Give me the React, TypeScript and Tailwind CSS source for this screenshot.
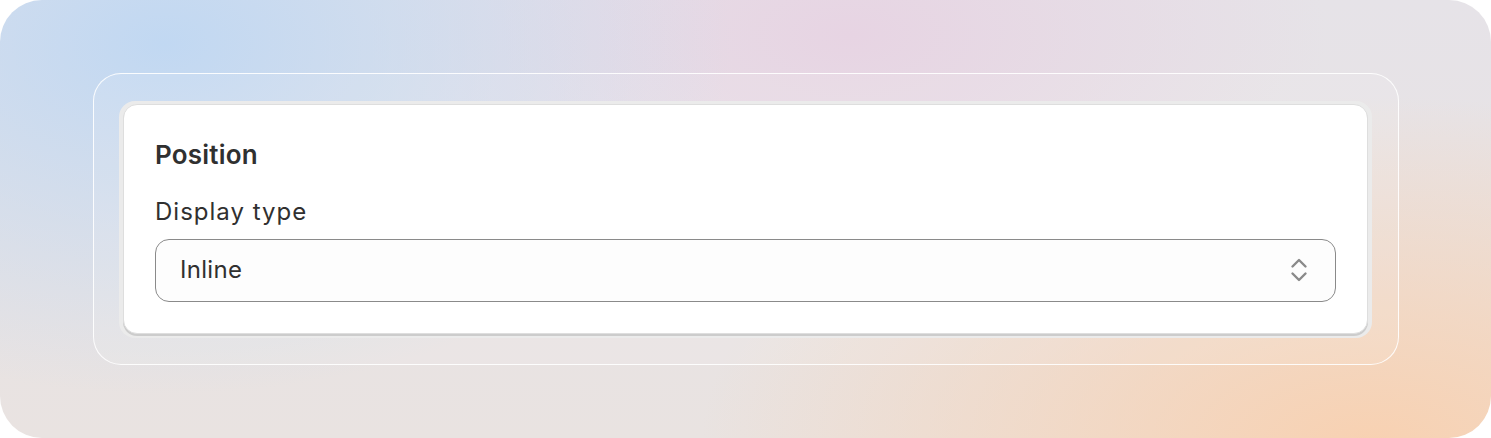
// Position settings card on a soft gradient backdrop
export default function App() {
  return (
    <div className="h-[438px] w-[1491px] bg-white font-['Inter','Noto_Sans',sans-serif] text-[#303030]">
      <div className="flex h-full w-full items-center justify-center rounded-[42px] bg-[radial-gradient(ellipse_38%_80%_at_11%_10%,#c1d8f2_0%,rgba(193,216,242,0)_100%),radial-gradient(ellipse_32%_55%_at_57%_8%,#e7d4e3_0%,rgba(231,212,227,0)_100%),radial-gradient(ellipse_45%_80%_at_92%_102%,#f8d1b1_0%,rgba(248,209,177,0)_100%),linear-gradient(180deg,#e6e3e8,#e9e3e1)]">
        {/* outer frame */}
        <div className="w-[1306px] rounded-[28px] border-[1.5px] border-white/90 bg-white/10 px-[25.5px] pb-[26.5px] pt-[26.5px]">
          {/* gray bevel */}
          <div className="rounded-[16px] bg-[#ebebeb] px-[4px] pb-[4px] pt-[3px]">
            <div className="rounded-[14px] border border-[#dedede] bg-white px-[31px] pb-[31px] pt-[34px] shadow-[0_2px_0_0_rgba(0,0,0,0.13)]">
              <h2 className="text-[26px] font-semibold leading-[32px] tracking-[0.2px]">Position</h2>
              <label className="mt-[26px] block text-[24px] leading-[30px] tracking-[1px]">Display type</label>
              <div className="mt-[12px] flex h-[63px] items-center justify-between rounded-[14px] border border-[#8a8a8a] bg-[#fdfdfd] pl-[24px] pr-[26px]">
                <span className="text-[24px] leading-[30px] tracking-[0.3px]">Inline</span>
                <svg width="20" height="28" viewBox="0 0 20 28" fill="none" stroke="#8a8a8a" strokeWidth="2.4" strokeLinecap="round" strokeLinejoin="round">
                  <path d="M3.5 10.5 L10 4 L16.5 10.5" />
                  <path d="M3.5 17.5 L10 24 L16.5 17.5" />
                </svg>
              </div>
            </div>
          </div>
        </div>
      </div>
    </div>
  );
}
